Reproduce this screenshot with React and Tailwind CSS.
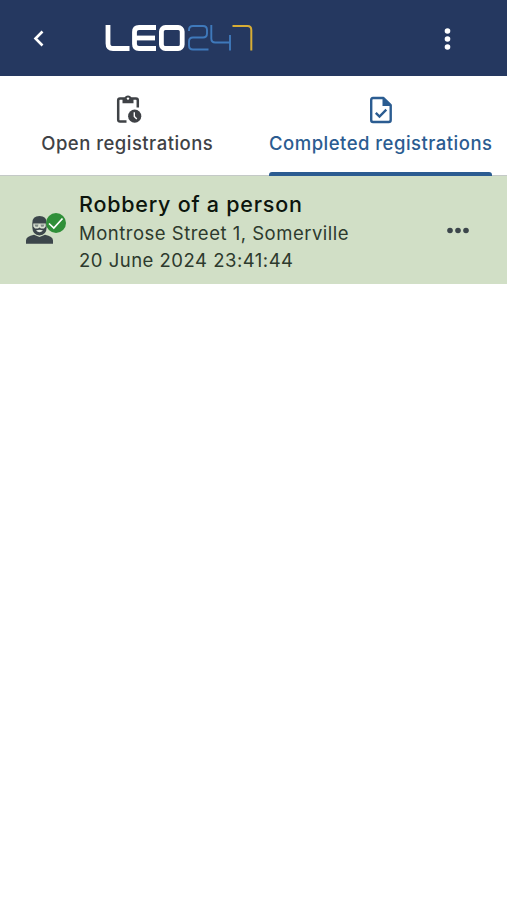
import React, { useState } from "react";

const Logo = () => (
  <svg width="148" height="28" viewBox="0 0 148 28" fill="none" role="img" aria-label="LEO247">
    <g stroke="#ffffff" strokeWidth="4.800" strokeLinejoin="round">
      <path d="M3 1V19.500Q3 24.500 8 24.500H24.500" />
      <path d="M51 3.500H34Q29.500 3.500 29.500 8V20Q29.500 24.500 34 24.500H51" />
      <path d="M29.500 14H50" />
      <rect x="56.400" y="3.500" width="20.800" height="21" rx="4" />
    </g>
    <g stroke="#3f79bb" strokeWidth="1.900">
      <path d="M84 7V6Q84 2 88 2H98Q102 2 102 6V9.500Q102 13.500 98 13.500H88Q84 13.500 84 17.500V21.500Q84 25.500 88 25.500H103.500" />
      <path d="M106.300 1V14.500Q106.300 18.500 110.300 18.500H125M125 11V26.500" />
    </g>
    <path d="M127.500 2H142.500Q146.300 2 146.300 6V26.500" stroke="#d8ad35" strokeWidth="2" />
  </svg>
);

const ClipboardClockIcon = () => (
  <svg width="26" height="30" viewBox="0 0 26 30" fill="none">
    <path d="M10.500 27.600H4Q2.200 27.600 2.200 25.800V6.400Q2.200 4.600 4 4.600H20Q21.800 4.600 21.800 6.400V13.400" stroke="currentColor" strokeWidth="2.500" />
    <path d="M6.500 4.200H8.500A3.600 3.600 0 0 1 15.500 4.200H17.500V9.200H6.500Z" fill="currentColor" />
    <circle cx="12" cy="4.600" r="1.200" fill="#ffffff" />
    <circle cx="18.700" cy="22.200" r="6.600" fill="currentColor" />
    <path d="M18.300 18.200V22.400L20.800 25" stroke="#ffffff" strokeWidth="1.400" />
  </svg>
);

const FileCheckIcon = () => (
  <svg width="24" height="30" viewBox="0 0 24 30" fill="none">
    <path d="M4 4H14.500L21.700 11.200V26Q21.700 28 19.700 28H4Q2.200 28 2.200 26V6Q2.200 4 4 4Z" stroke="currentColor" strokeWidth="2.400" strokeLinejoin="round" />
    <path d="M13.500 3.500V12H22Z" fill="currentColor" />
    <path d="M6.800 18.800L10.500 22.500L17.300 15.700" stroke="currentColor" strokeWidth="2.400" />
  </svg>
);

const RobberIcon = () => (
  <svg width="42" height="34" viewBox="0 0 42 34" fill="none">
    <path d="M1 31.800V28.500Q1 24.500 9 22.800L14.500 25L20 22.800Q28 24.500 28 28.500V31.800Z" fill="#3c464b" />
    <path d="M7.300 11Q7.300 4 14.500 4T21.700 11V15Q21.500 23 14.500 23.500Q7.500 23 7.300 15Z" fill="#3c464b" />
    <path d="M8.300 11.500H20.700V14.500L19 16.500H16L14.500 15.500L13 16.500H10L8.300 14.500Z" fill="#d7e0d0" />
    <path d="M9.500 12.500H13.500L12.800 14.800H10.500ZM15.500 12.500H19.500L18.500 14.800H16.200Z" fill="#7f8a86" />
    <path d="M11 18.600Q14.500 17 18 18.600Q14.500 22 11 18.600Z" fill="#e3eadf" />
    <circle cx="31" cy="11" r="10" fill="#2f8f38" />
    <path d="M24 11.500L28.800 16L37.500 6.500" stroke="#ffffff" strokeWidth="1.700" />
  </svg>
);

const tabs = [
  { id: "open", label: "Open registrations", icon: <ClipboardClockIcon /> },
  { id: "completed", label: "Completed registrations", icon: <FileCheckIcon /> },
];

const registrations = [
  {
    id: 1,
    title: "Robbery of a person",
    address: "Montrose Street 1, Somerville",
    date: "20 June 2024 23:41:44",
  },
];

const App = () => {
  const [activeTab, setActiveTab] = useState("completed");

  return (
    <div className="min-h-screen bg-white font-['Inter',sans-serif]">
      {/* header */}
      <header className="flex h-[76px] items-center bg-[#253860] text-white">
        <button aria-label="Back" className="ml-[32px] mr-[60px]">
          <svg width="13" height="18" viewBox="0 0 13 18" fill="none">
            <path d="M10.500 2.500L3.500 9.500L10.500 16.500" stroke="currentColor" strokeWidth="2.600" />
          </svg>
        </button>
        <Logo />
        <button aria-label="Menu" className="ml-auto mr-[56px] mt-px">
          <svg width="7" height="24" viewBox="0 0 7 24" fill="currentColor">
            <circle cx="3.500" cy="4" r="2.800" />
            <circle cx="3.500" cy="12" r="2.800" />
            <circle cx="3.500" cy="20" r="2.800" />
          </svg>
        </button>
      </header>

      {/* tabs */}
      <nav className="grid h-[100px] grid-cols-2 border-b border-[#c4c9c7]">
        {tabs.map((tab) => (
          <button
            key={tab.id}
            onClick={() => setActiveTab(tab.id)}
            className={`flex flex-col items-center pt-[18px] ${tab.id === activeTab ? "text-[#2b5c91]" : "text-[#3f4246]"}`}
          >
            <span className={tab.id === "open" ? "ml-[4px] h-[30px]" : "ml-[2px] h-[30px]"}>{tab.icon}</span>
            <span className="ml-px mt-[7px] whitespace-nowrap text-[18.5px] font-medium leading-6 tracking-[0.48px]">{tab.label}</span>
            {tab.id === activeTab && <span className="-mb-px mt-auto h-1 w-[223px] rounded-t-[3px] bg-[#2b5c91]" />}
          </button>
        ))}
      </nav>

      {/* list */}
      <ul>
        {registrations.map((r) => (
          <li key={r.id} className="flex h-[108px] bg-[#d1dfc6]">
            <div className="ml-[25px] mt-[36px] w-[54px]">
              <RobberIcon />
            </div>
            <div className="whitespace-nowrap pt-[14px] text-[18.5px] leading-[27px] tracking-[0.5px] text-[#2d3a2d]">
              <h2 className="mb-px text-[21.5px] font-medium leading-[29px] tracking-[0.76px] text-[#0c150d]">{r.title}</h2>
              <p>{r.address}</p>
              <p>{r.date}</p>
            </div>
            <button aria-label="More" className="ml-auto mr-[37px] self-center">
              <svg width="24" height="7" viewBox="0 0 24 7" fill="#3c464b">
                <circle cx="4" cy="3.500" r="2.800" />
                <circle cx="12" cy="3.500" r="2.800" />
                <circle cx="20" cy="3.500" r="2.800" />
              </svg>
            </button>
          </li>
        ))}
      </ul>
    </div>
  );
};

export default App;
